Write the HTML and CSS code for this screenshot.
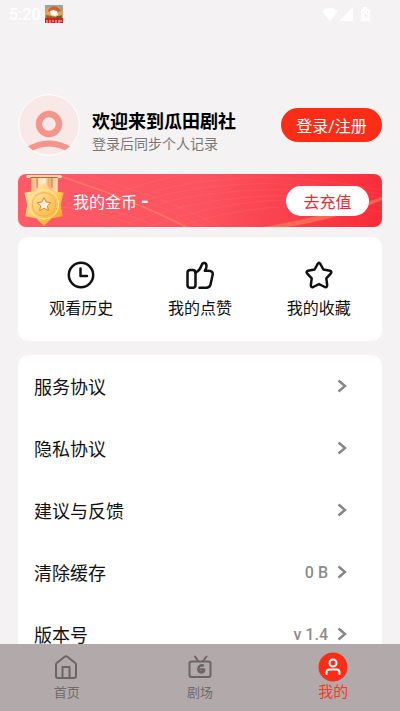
FILE: index.html
```html
<!DOCTYPE html>
<html lang="zh-CN">
<head>
<meta charset="utf-8">
<meta name="viewport" content="width=device-width, initial-scale=1">
<title>我的</title>
<link rel="stylesheet" href="styles.css">
</head>
<body>
<header class="status">
  <span class="clock">5:20</span>
  <svg class="app" viewBox="0 0 18 18" aria-hidden="true">
    <rect width="18" height="18" fill="#8fa9a0"/>
    <path d="M1 4L5 2H14L18 7V13H0V7Z" fill="#d9a65c"/>
    <path d="M3 6C4 0 14 0 16 6L13 7H5Z" fill="#d75a35"/>
    <path d="M5 6L8 5L12 6L13 10L10 11L6 10Z" fill="#fff8ec"/>
    <path d="M1 10L6 11L10 12L17 10V14H1Z" fill="#a85b2b"/>
    <path d="M12 11H16V13H11Z" fill="#4d6940"/>
    <rect y="13" width="18" height="5" fill="#d51f22"/>
    <path d="M2 15V18M5 15V18M8 15V17M11 15V18M14 15V18M16 15V17" stroke="#fff" stroke-width=".8"/>
  </svg>
  <svg class="signals" viewBox="0 0 50 16" aria-hidden="true">
    <path d="M1 5Q9 -1 17 5L9 15Z"/>
    <path d="M32 1V15H18Z"/>
    <path fill-rule="evenodd" d="M42 1H46V3H49V15H40V3H42ZM42 5V7H43V5ZM46 5V7H47V5ZM45 7L43 10H44V13L47 9H45Z"/>
  </svg>
</header>
<main class="page">
  <section class="profile">
    <svg class="avatar" viewBox="0 0 62 62" aria-hidden="true">
      <defs><clipPath id="face"><circle cx="31" cy="31" r="30"/></clipPath></defs>
      <circle cx="31" cy="31" r="30.3" fill="#f8e8e8" stroke="#fff" stroke-width="1"/>
      <g fill="none" stroke="#f5948b" clip-path="url(#face)">
        <circle cx="31" cy="30" r="10" stroke-width="6.4"/>
        <path d="M8 57Q31 42 54 57" stroke-width="6"/>
      </g>
    </svg>
    <div class="who">
      <h1>欢迎来到瓜田剧社</h1>
      <p>登录后同步个人记录</p>
    </div>
    <button class="login" type="button">登录/注册</button>
  </section>

  <section class="coins">
    <svg class="waves" viewBox="0 0 364 53" preserveAspectRatio="none" aria-hidden="true">
      <g fill="none" stroke="#ff9a8c" stroke-opacity=".2" stroke-width=".7">
        <path d="M40 2Q110 24 172 53M46 -2Q120 20 186 53M56 -2Q140 20 204 53M0 35Q60 26 120 53M0 40Q50 34 100 53M0 30Q70 22 140 53"/>
        <path d="M90 34Q200 -16 364 16M90 39Q200 -8 364 20M94 44Q210 0 364 24M110 49Q220 8 364 28M130 53Q240 12 364 32M80 27Q190 -22 330 -2M150 56Q250 20 364 38"/>
      </g>
      <path d="M42 2Q115 26 168 53" fill="none" stroke="#ffb070" stroke-opacity=".35" stroke-width="1.5"/>
      <path d="M240 54Q310 42 364 23V26Q315 47 262 54Z" fill="#ff9661" fill-opacity=".5"/>
    </svg>
    <svg class="medal" viewBox="0 0 42 54" aria-hidden="true">
      <defs>
        <linearGradient id="gold" x1="0" y1="0" x2="1" y2="1"><stop offset="0" stop-color="#ffe9ae"/><stop offset=".55" stop-color="#ffc956"/><stop offset="1" stop-color="#f59a0d"/></linearGradient>
        <linearGradient id="ribbon" x2="1"><stop offset="0" stop-color="#f4b679"/><stop offset=".35" stop-color="#ffe2b5"/><stop offset=".5" stop-color="#fff3df"/><stop offset=".65" stop-color="#efaa70"/><stop offset="1" stop-color="#ffe5be"/></linearGradient>
        <linearGradient id="disc" x1="0" y1="0" x2="1" y2="1"><stop offset="0" stop-color="#ffe3a0"/><stop offset="1" stop-color="#fdb437"/></linearGradient>
      </defs>
      <path d="M8 3H35V20H8Z" fill="url(#ribbon)"/>
      <path d="M14 4V14M29 4V14" stroke="#df8d55" stroke-width="1.5"/>
      <rect x="3" y="1" width="36" height="3" rx="1" fill="#ffdfac"/>
      <path d="M7 3.500H35" stroke="#99603a"/>
      <path d="M21 9L29 17L41 19L38 31L40 43L29 45L21 53L13 45L2 43L4 31L1 19L13 17Z" fill="url(#gold)"/>
      <circle cx="21" cy="31" r="15" fill="url(#disc)" stroke="#ffe9ae" stroke-width="1"/>
      <circle cx="21" cy="31" r="12" fill="url(#disc)" stroke="#eeb04c" stroke-width="1"/>
      <path d="M21 24L23.200 28.600L28 29.200L24.500 32.500L25.400 37.300L21 35L16.600 37.300L17.500 32.500L14 29.200L18.800 28.600Z" fill="#fff1dc" stroke="#d98531"/>
    </svg>
    <span class="balance">我的金币 <b>-</b></span>
    <button class="topup" type="button">去充值</button>
  </section>

  <nav class="card quick" aria-label="快捷入口">
    <a href="#history">
      <svg viewBox="0 0 28 28" aria-hidden="true"><circle cx="14" cy="14" r="12.200"/><path d="M13.500 7.500V15H20"/></svg>
      观看历史
    </a>
    <a href="#likes">
      <svg viewBox="0 0 28 28" aria-hidden="true"><rect x="1.500" y="9" width="8" height="17.800" rx="2.800"/><path d="M9.500 11.500Q13.500 10 15.500 4.500C16.500 1 20.500 1 20.500 5Q20.500 7.500 18.800 9.700H22.500C25.800 9.700 27.200 11.500 26.600 14L24.500 23.500C23.900 26 22.500 26.800 20 26.800H13.500"/></svg>
      我的点赞
    </a>
    <a href="#favorites">
      <svg viewBox="0 0 28 28" aria-hidden="true"><path d="M12.700 2.900Q14 .8 15.300 2.900L18.400 8.500L25 9.800Q27.200 10.500 25.900 12.400L21.300 17.300L22.200 24.300Q22.100 26.700 19.800 26L14 23.100L8.200 26Q5.900 26.700 5.800 24.300L6.700 17.300L2.100 12.400Q.8 10.500 3 9.800L9.600 8.500Z"/></svg>
      我的收藏
    </a>
  </nav>

  <ul class="card list">
    <li><a href="#terms"><span>服务协议</span><svg viewBox="0 0 10 14" aria-hidden="true"><path d="M1.500 1.500L8 7L1.500 12.500"/></svg></a></li>
    <li><a href="#privacy"><span>隐私协议</span><svg viewBox="0 0 10 14" aria-hidden="true"><path d="M1.500 1.500L8 7L1.500 12.500"/></svg></a></li>
    <li><a href="#feedback"><span>建议与反馈</span><svg viewBox="0 0 10 14" aria-hidden="true"><path d="M1.500 1.500L8 7L1.500 12.500"/></svg></a></li>
    <li><a href="#cache"><span>清除缓存</span><em>0 B</em><svg viewBox="0 0 10 14" aria-hidden="true"><path d="M1.500 1.500L8 7L1.500 12.500"/></svg></a></li>
    <li><a href="#version"><span>版本号</span><em>v 1.4</em><svg viewBox="0 0 10 14" aria-hidden="true"><path d="M1.500 1.500L8 7L1.500 12.500"/></svg></a></li>
  </ul>
</main>

<nav class="tabs" aria-label="主导航">
  <a href="#home">
    <svg viewBox="0 0 24 26" aria-hidden="true"><path d="M1 10.500Q1 9.500 2 8.700L10 2.500Q11 1.800 12 2.500L20 8.700Q21 9.500 21 10.500V22Q21 24 19 24H3Q1 24 1 22Z"/><path d="M7.500 24V13H14.500V24"/></svg>
    首页
  </a>
  <a href="#theater">
    <svg viewBox="0 0 24 26" aria-hidden="true"><rect x="1.500" y="7.500" width="21" height="15.500" rx="2"/><path d="M7 2.500L10 7M18.500 2.500L15 7"/><path d="M15 11.500C9.500 10 9 18.500 13 18.500Q16 18.500 16 15.500H13" stroke-width="2.600"/></svg>
    剧场
  </a>
  <a class="current" href="#me" aria-current="page">
    <svg viewBox="0 0 30 30" aria-hidden="true"><circle class="disc" cx="15" cy="15" r="14.500"/><circle cx="15" cy="11" r="3.500"/><path d="M8.500 22V20.500Q8.500 17.500 11.500 17.500H18.500Q21.500 17.500 21.500 20.500V22"/></svg>
    我的
  </a>
</nav>
</body>
</html>
```
FILE: styles.css
```css
* {
  box-sizing: border-box;
}

body {
  margin: 0;
  height: 100vh;
  display: flex;
  flex-direction: column;
  background: #f4f2f3;
  color: #111;
  font-family: Roboto, "Noto Sans CJK SC", sans-serif;
  font-size: 16px;
}

a {
  color: inherit;
  text-decoration: none;
}

button {
  border: 0;
  border-radius: 20px;
  font: inherit;
  padding: 0;
  cursor: pointer;
}

svg {
  flex: none;
}

.status {
  flex: none;
  height: 28px;
  padding: 0 29px 0 9px;
  display: flex;
  align-items: center;
  gap: 4px;
  color: #fff;
}

.clock {
  font-weight: 500;
}

.app {
  width: 18px;
  height: 18px;
}

.signals {
  width: 50px;
  height: 16px;
  margin-left: auto;
  fill: #fff;
}

.page {
  flex: 1;
  min-height: 0;
  overflow-y: auto;
  scrollbar-width: none;
  padding: 66px 18px 0;
}

.profile {
  display: flex;
  align-items: center;
  margin-bottom: 18px;
}

.avatar {
  width: 62px;
  height: 62px;
  margin-right: 12px;
}

.who {
  flex: 1;
  padding-top: 14px;
}

.who h1 {
  margin: 0;
  font-size: 18px;
  line-height: 24px;
  font-weight: 700;
  color: #000;
}

.who p {
  margin: 0;
  font-size: 14px;
  line-height: 20px;
  color: #777;
}

.login {
  width: 101px;
  height: 34px;
  background: #fc2d17;
  color: #fff;
}

.coins {
  position: relative;
  display: flex;
  align-items: center;
  height: 53px;
  margin-bottom: 10px;
  padding: 0 13px 0 5px;
  border-radius: 8px;
  overflow: hidden;
  background: linear-gradient(100deg, #fc5b68, #fc5360 50%, #f92b38);
  color: #fff;
}

.waves {
  position: absolute;
  inset: 0;
  width: 100%;
  height: 100%;
}

.medal {
  position: relative;
  width: 42px;
  height: 53px;
}

.balance {
  position: relative;
  flex: 1;
  margin-left: 8px;
}

.balance b {
  font-size: 20px;
  line-height: 20px;
}

.topup {
  position: relative;
  width: 83px;
  height: 30px;
  background: #fff;
  color: #f32636;
}

.card {
  background: #fff;
  border-radius: 10px;
}

.quick {
  display: flex;
  height: 104px;
  margin-bottom: 14px;
  padding: 24px 4px 0;
}

.quick a {
  flex: 1;
  display: flex;
  flex-direction: column;
  align-items: center;
  gap: 8px;
  line-height: 24px;
}

.quick svg {
  width: 28px;
  height: 28px;
  fill: none;
  stroke: #111;
  stroke-width: 2.5;
  stroke-linecap: round;
  stroke-linejoin: round;
}

.list {
  margin: 0;
  padding: 0 35px 0 16px;
  list-style: none;
}

.list a {
  display: flex;
  align-items: center;
  height: 62px;
  font-size: 18px;
}

.list span {
  flex: 1;
}

.list em {
  margin-right: 9px;
  font-size: 16px;
  font-style: normal;
  font-weight: 500;
  color: #8c8c8c;
}

.list svg {
  width: 10px;
  height: 14px;
  fill: none;
  stroke: #858585;
  stroke-width: 2.4;
}

.tabs {
  flex: none;
  display: flex;
  height: 67px;
  background: #b2a9aa;
  color: #706b6c;
  font-size: 13px;
  line-height: 20px;
}

.tabs a {
  flex: 1;
  display: flex;
  flex-direction: column;
  align-items: center;
  padding-top: 10px;
  gap: 3px;
}

.tabs svg {
  width: 24px;
  height: 26px;
  fill: none;
  stroke: #6a6566;
  stroke-width: 2;
  stroke-linecap: round;
  stroke-linejoin: round;
}

.tabs .current {
  padding-top: 8px;
  gap: 0;
  color: #f2392c;
  font-size: 15px;
}

.current svg {
  width: 30px;
  height: 30px;
  stroke: #fff;
}

.current .disc {
  fill: #fc2d17;
  stroke: none;
}
```
